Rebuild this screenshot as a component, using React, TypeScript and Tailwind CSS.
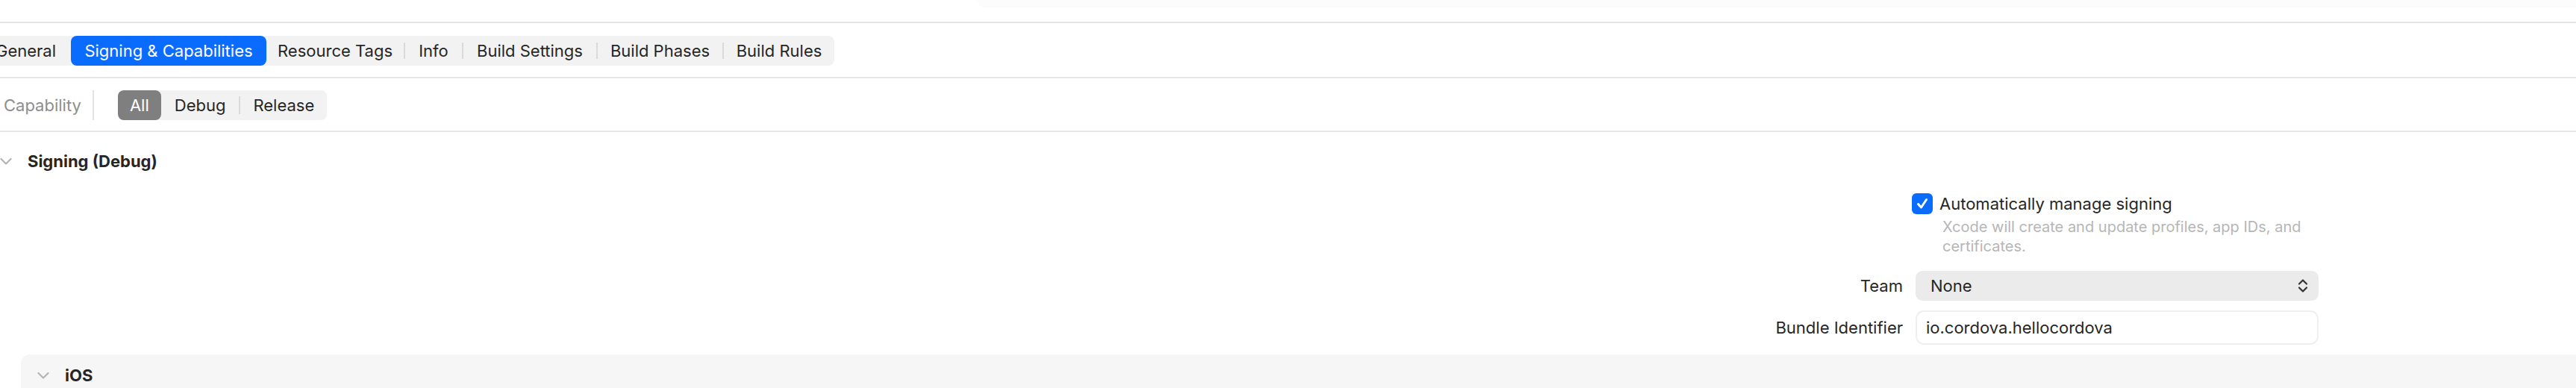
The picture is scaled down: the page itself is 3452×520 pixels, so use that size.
import React from "react";

const TABS = [
  { label: "General", w: "w-[121px]" },
  { label: "Signing & Capabilities", w: "w-[262px]" },
  { label: "Resource Tags", w: "w-[184px]" },
  { label: "Info", w: "w-[76px]" },
  { label: "Build Settings", w: "w-[178px]" },
  { label: "Build Phases", w: "w-[167px]" },
  { label: "Build Rules", w: "w-[148px]" },
];
const ACTIVE = 1;

function Chevron({ className }: { className?: string }) {
  return (
    <svg viewBox="0 0 16 10" className={className} fill="none">
      <path d="M1.5 1.5 L8 8 L14.5 1.5" stroke="#b4b4b4" strokeWidth="2.2" strokeLinecap="round" strokeLinejoin="round" />
    </svg>
  );
}

function Tabs() {
  return (
    <div className="ml-[-26px] flex h-[40px] items-center rounded-[8px] bg-[#f2f2f2]">
      {TABS.map((t, i) => {
        const active = i === ACTIVE;
        const showSep = i > 0 && i !== ACTIVE && i - 1 !== ACTIVE;
        return (
          <React.Fragment key={t.label}>
            {showSep && <div className="h-[22px] w-[2px] shrink-0 bg-[#dadada]" />}
            <div
              className={
                active
                  ? `flex h-[40px] shrink-0 items-center justify-center rounded-[8px] bg-[#0a6cff] text-white ${t.w}`
                  : `flex h-[40px] shrink-0 items-center justify-center text-[#262626] ${t.w}`
              }
            >
              {t.label}
            </div>
          </React.Fragment>
        );
      })}
    </div>
  );
}

function Segments() {
  return (
    <div className="flex h-[40px] items-center rounded-[8px] bg-[#f2f2f2]">
      <div className="flex h-[40px] items-center rounded-[8px] bg-[#7f7f7f] px-[16px] text-white">All</div>
      <div className="flex h-[40px] items-center px-[18px]">Debug</div>
      <div className="h-[24px] w-[2px] bg-[#dadada]" />
      <div className="flex h-[40px] items-center px-[17px]">Release</div>
    </div>
  );
}

function Row({ label, children }: { label?: string; children: React.ReactNode }) {
  return (
    <div className="flex items-center">
      <div className="w-[2550px] shrink-0 text-right">{label}</div>
      <div className="ml-[17px] w-[540px] shrink-0">{children}</div>
    </div>
  );
}

export default function App() {
  return (
    <div className="h-[520px] w-[3452px] overflow-hidden bg-white font-[Inter,sans-serif] text-[22px] leading-[28px] text-[#262626]">
      {/* toolbar remnant */}
      <div className="flex h-[29px]">
        <div className="w-[1310px]" />
        <div className="h-[10px] flex-1 rounded-bl-[10px] bg-[#fcfcfc]" />
      </div>
      <div className="h-[2px] bg-[#e5e5e5]" />

      <div className="pt-[17px] pb-[15px]">
        <div className="flex">
          <Tabs />
        </div>
      </div>
      <div className="h-[2px] bg-[#e5e5e5]" />

      <div className="flex items-center pt-[16px] pb-[14px]">
        <div className="pl-[5px] text-[#8e8e8e]">Capability</div>
        <div className="ml-[15px] h-[40px] w-[2px] bg-[#e3e3e3]" />
        <div className="ml-[32px]">
          <Segments />
        </div>
      </div>
      <div className="h-[2px] bg-[#e5e5e5]" />

      {/* Signing (Debug) */}
      <div className="flex items-center pt-[25px]">
        <Chevron className="h-[11px] w-[16px]" />
        <div className="ml-[21px] font-bold">Signing (Debug)</div>
      </div>

      <div className="mt-[29px]">
        <Row>
          <div className="ml-[-5px] flex items-center">
            <div className="flex h-[28px] w-[28px] items-center justify-center rounded-[6px] bg-[#0a6cff]">
              <svg viewBox="0 0 20 20" className="h-[20px] w-[20px]" fill="none">
                <path d="M4.5 10.5 L8.5 15 L15.5 4.5" stroke="white" strokeWidth="3" strokeLinecap="round" strokeLinejoin="round" />
              </svg>
            </div>
            <div className="ml-[9px]">Automatically manage signing</div>
          </div>
        </Row>
        <Row>
          <div className="mt-[4px] ml-[36px] w-[560px] text-[20px] leading-[26px] text-[#b6b6b6]">
            Xcode will create and update profiles, app IDs, and
            <br />
            certificates.
          </div>
        </Row>
      </div>

      <div className="mt-[20px]">
        <Row label="Team">
          <div className="flex h-[40px] items-center justify-between rounded-[9px] bg-[#ebebeb] pr-[14px] pl-[20px]">
            <span>None</span>
            <svg viewBox="0 0 14 20" className="h-[20px] w-[14px]" fill="none">
              <path d="M2 7.5 L7 2.5 L12 7.5" stroke="#333" strokeWidth="2.2" strokeLinecap="round" strokeLinejoin="round" />
              <path d="M2 12.5 L7 17.5 L12 12.5" stroke="#333" strokeWidth="2.2" strokeLinecap="round" strokeLinejoin="round" />
            </svg>
          </div>
        </Row>
      </div>
      <div className="mt-[13px]">
        <Row label="Bundle Identifier">
          <div className="flex h-[46px] items-center rounded-[11px] border-2 border-[#efefef] bg-white pl-[12px]">
            io.cordova.hellocordova
          </div>
        </Row>
      </div>

      {/* iOS section */}
      <div className="mt-[13px] ml-[28px] h-[120px] rounded-tl-[12px] bg-[#f6f6f6] pt-[14px]">
        <div className="flex items-center">
          <Chevron className="ml-[22px] h-[11px] w-[16px]" />
          <div className="ml-[21px] font-bold">iOS</div>
        </div>
      </div>
    </div>
  );
}
